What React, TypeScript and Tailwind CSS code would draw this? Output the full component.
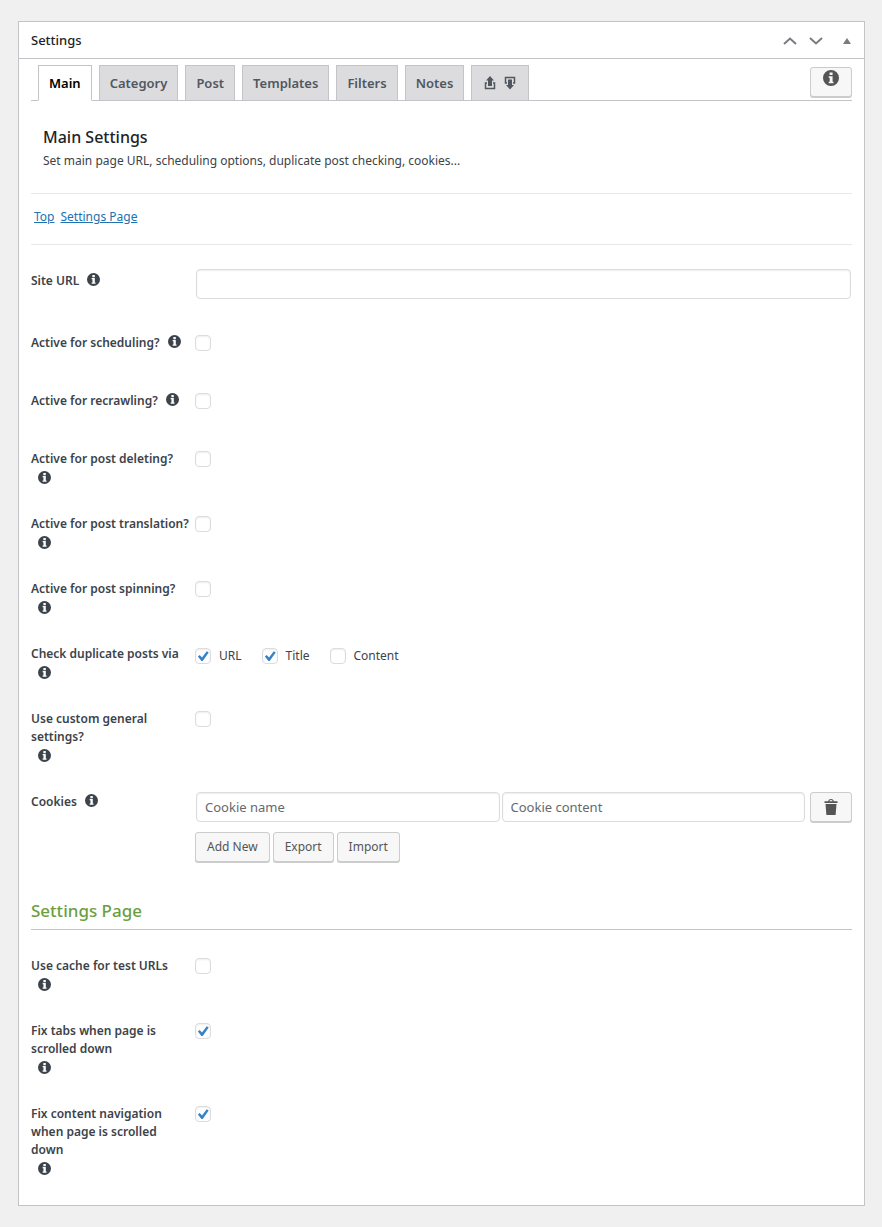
import React, { useState } from 'react'
import clsx from 'clsx'

const TABS = ['Main', 'Category', 'Post', 'Templates', 'Filters', 'Notes']

function InfoIcon({ className }: { className?: string }) {
  return (
    <svg viewBox="0 0 16 16" className={className} fill="currentColor" aria-hidden="true">
      <path
        fillRule="evenodd"
        d="M8 0a8 8 0 1 0 0 16A8 8 0 0 0 8 0ZM6.600 2.600h3v2.500h-3V2.600ZM5.700 6.300h3.900v5.500h.9v1.400H5.700v-1.400h1V7.700h-1V6.300Z"
      />
    </svg>
  )
}

function TrashIcon() {
  return (
    <svg viewBox="0 0 14 16" className="h-4 w-[14px]" fill="currentColor" aria-hidden="true">
      <path d="M.5 2.200h3.600C4.500.8 5.600 0 7 0s2.500.8 2.900 2.200h3.600V4H.5V2.200Zm4.700 0h3.600C8.400 1.400 7.800 1 7 1s-1.400.4-1.800 1.200Z" />
      <path d="M1.500 5h11l-.9 11H2.400L1.500 5Z" />
    </svg>
  )
}

function UploadIcon() {
  return (
    <svg viewBox="0 0 12 14" className="h-[14px] w-3" aria-hidden="true">
      <path d="M6 0l4 4.500H8V10H4V4.500H2L6 0Z" fill="currentColor" />
      <path d="M3 7H1.500v5.500h9V7H9" fill="none" stroke="currentColor" strokeWidth="1.500" />
    </svg>
  )
}

function DownloadIcon() {
  return (
    <svg viewBox="0 0 12 14" className="h-[14px] w-3" aria-hidden="true">
      <path d="M6 13.500L2 9h2V3.500h4V9h2L6 13.500Z" fill="currentColor" />
      <path d="M3 7H1.500V1.500h9V7H9" fill="none" stroke="currentColor" strokeWidth="1.500" />
    </svg>
  )
}

function Checkbox({ id, checked }: { id: string; checked?: boolean }) {
  return (
    <span className="relative block size-4 shrink-0">
      <input
        id={id}
        type="checkbox"
        defaultChecked={checked}
        className="peer block size-4 appearance-none rounded border border-[#dcdcde] bg-white shadow-[inset_0_1px_2px_rgba(0,0,0,0.07)]"
      />
      <svg
        viewBox="0 0 16 16"
        className="pointer-events-none absolute inset-0 hidden size-4 peer-checked:block"
        fill="#3582c4"
        aria-hidden="true"
      >
        <path d="M11.800 3.200l1.900 1.200-6 8.600-1.300.1-3.500-4.600 1.800-1.400 2.300 2.400 4.800-6.300Z" />
      </svg>
    </span>
  )
}

interface RowProps {
  label: string
  htmlFor: string
  // puts the hint on its own line under the label
  hintBelow?: boolean
  children: React.ReactNode
}

function Row({ label, htmlFor, hintBelow, children }: RowProps) {
  return (
    <div className="grid min-h-[58px] grid-cols-[164px_1fr] items-start">
      <div className={clsx('flex pt-[15px] pb-[14px]', hintBelow ? 'w-[160px] flex-col items-start' : 'items-center')}>
        <label htmlFor={htmlFor} className="text-xs leading-[18px] font-semibold text-[#3c434a]">
          {label}
        </label>
        <button
          type="button"
          aria-label={'About ' + label}
          className={clsx('flex h-[18px] text-[#3c434a]', hintBelow ? 'ml-[7px] items-center' : 'ml-2 items-start pt-px')}
        >
          <InfoIcon className="size-[13px]" />
        </button>
      </div>
      {children}
    </div>
  )
}

function CheckRow({ id, label, checked, hintBelow }: { id: string; label: string; checked?: boolean; hintBelow?: boolean }) {
  return (
    <Row label={label} htmlFor={id} hintBelow={hintBelow}>
      <div className="pt-4">
        <Checkbox id={id} checked={checked} />
      </div>
    </Row>
  )
}

function InlineCheck({ id, label, checked }: { id: string; label: string; checked?: boolean }) {
  return (
    <div className="flex items-center gap-2">
      <Checkbox id={id} checked={checked} />
      <label htmlFor={id} className="text-xs leading-4">{label}</label>
    </div>
  )
}

const inputClass =
  'h-[30px] w-full min-w-0 rounded border border-[#dcdcde] bg-white px-2 text-[13px] text-[#2c3338] placeholder:text-[#646970] shadow-[inset_0_1px_2px_rgba(0,0,0,0.07)]'

const buttonClass =
  'flex items-center justify-center rounded-[3px] border border-[#ccc] bg-[#f7f7f7] text-xs text-[#555] shadow-[0_1px_0_#ccc]'

export default function App() {
  const [tab, setTab] = useState('Main')

  return (
    <div className="min-h-screen bg-[#f0f0f1] px-[18px] pt-[21px] pb-[22px] font-['Noto_Sans',sans-serif] text-[#3c434a]">
      <section className="mr-[-1px] border border-[#c3c4c7] bg-white">
        <header className="flex h-[37px] items-center justify-between border-b border-[#c3c4c7] pt-[2px] pr-[13px] pl-3 text-[#787c82]">
          <h2 className="text-[13px] font-medium text-[#1d2327]">Settings</h2>
          <div className="flex items-center">
            <button type="button" aria-label="Move up">
              <svg viewBox="0 0 14 8" className="h-2 w-[14px]" fill="none" stroke="currentColor" strokeWidth="2" aria-hidden="true">
                <path d="M1 7l6-5.500L13 7" />
              </svg>
            </button>
            <button type="button" aria-label="Move down" className="ml-3">
              <svg viewBox="0 0 14 8" className="h-2 w-[14px]" fill="none" stroke="currentColor" strokeWidth="2" aria-hidden="true">
                <path d="M1 1l6 5.500L13 1" />
              </svg>
            </button>
            <button type="button" aria-label="Toggle panel" className="ml-5">
              <svg viewBox="0 0 8 6" className="h-[6px] w-2" fill="currentColor" aria-hidden="true">
                <path d="M4 0l4 6H0L4 0Z" />
              </svg>
            </button>
          </div>
        </header>

        <div className="px-3 pb-[14px]">
          <div className="flex h-[42px] items-end justify-between border-b border-[#c3c4c7]">
            <nav className="mb-[-1px] flex gap-[7px] pl-[7px]">
              {TABS.map((name) => (
                <button
                  key={name}
                  type="button"
                  onClick={() => setTab(name)}
                  className={clsx(
                    'h-9 border border-[#c3c4c7] px-[10px] pt-px text-[13px] font-semibold',
                    tab === name ? 'border-b-white bg-white text-black' : 'bg-[#dcdcde] text-[#50575e]'
                  )}
                >
                  {name}
                </button>
              ))}
              <button
                type="button"
                aria-label="Import and export settings"
                className="flex h-9 items-center gap-2 border border-[#c3c4c7] bg-[#dcdcde] px-3 text-[#50575e]"
              >
                <UploadIcon />
                <DownloadIcon />
              </button>
            </nav>
            <button type="button" aria-label="Show all hints" className={clsx(buttonClass, 'mb-[3px] h-[30px] w-[42px] pb-2')}>
              <InfoIcon className="size-4" />
            </button>
          </div>

          <div className="border-b border-[#e8e8e9] px-3 pt-6 pb-[22px]">
            <h3 className="mb-[2px] text-base leading-6 font-medium text-[#1d2327]">Main Settings</h3>
            <p className="text-xs leading-5">Set main page URL, scheduling options, duplicate post checking, cookies...</p>
          </div>

          <nav className="flex h-[51px] items-center gap-[6px] border-b border-[#e8e8e9] px-[3px] pb-1 text-xs text-[#2271b1]">
            <a href="#top" className="underline">Top</a>
            <a href="#settings-page" className="underline">Settings Page</a>
          </nav>

          <form className="pt-3" onSubmit={(e) => e.preventDefault()}>
            <div className="pb-1">
              <Row label="Site URL" htmlFor="site-url">
                <div className="pt-3 pr-px pl-px">
                  <input id="site-url" type="text" className={inputClass} />
                </div>
              </Row>
            </div>
            <CheckRow id="scheduling" label="Active for scheduling?" />
            <CheckRow id="recrawling" label="Active for recrawling?" />
            <CheckRow id="deleting" label="Active for post deleting?" hintBelow />
            <CheckRow id="translation" label="Active for post translation?" hintBelow />
            <CheckRow id="spinning" label="Active for post spinning?" hintBelow />
            <Row label="Check duplicate posts via" htmlFor="dup-url" hintBelow>
              <div className="flex flex-wrap gap-5 pt-[18px]">
                <InlineCheck id="dup-url" label="URL" checked />
                <InlineCheck id="dup-title" label="Title" checked />
                <InlineCheck id="dup-content" label="Content" />
              </div>
            </Row>
            <CheckRow id="custom-general" label="Use custom general settings?" hintBelow />
            <Row label="Cookies" htmlFor="cookie-name">
              <div className="pt-[14px]">
                <div className="flex items-start pl-px">
                  <div className="flex flex-1 gap-[2px]">
                    <input id="cookie-name" type="text" placeholder="Cookie name" className={inputClass} />
                    <input type="text" aria-label="Cookie content" placeholder="Cookie content" className={inputClass} />
                  </div>
                  <button type="button" aria-label="Delete cookie" className={clsx(buttonClass, 'ml-[5px] h-[30px] w-[42px]')}>
                    <TrashIcon />
                  </button>
                </div>
                <div className="mt-[10px] flex gap-[3px]">
                  <button type="button" className={clsx(buttonClass, 'h-[30px] px-[11px]')}>Add New</button>
                  <button type="button" className={clsx(buttonClass, 'h-[30px] px-[11px]')}>Export</button>
                  <button type="button" className={clsx(buttonClass, 'h-[30px] px-[11px]')}>Import</button>
                </div>
              </div>
            </Row>

            <h3 id="settings-page" className="mt-[37px] mb-3 border-b border-[#c3c4c7] pb-[6px] text-[17px] leading-6 font-medium text-[#6a9f3f]">
              Settings Page
            </h3>
            <CheckRow id="cache" label="Use cache for test URLs" hintBelow />
            <CheckRow id="fix-tabs" label="Fix tabs when page is scrolled down" checked hintBelow />
            <CheckRow id="fix-nav" label="Fix content navigation when page is scrolled down" checked hintBelow />
          </form>
        </div>
      </section>
    </div>
  )
}
